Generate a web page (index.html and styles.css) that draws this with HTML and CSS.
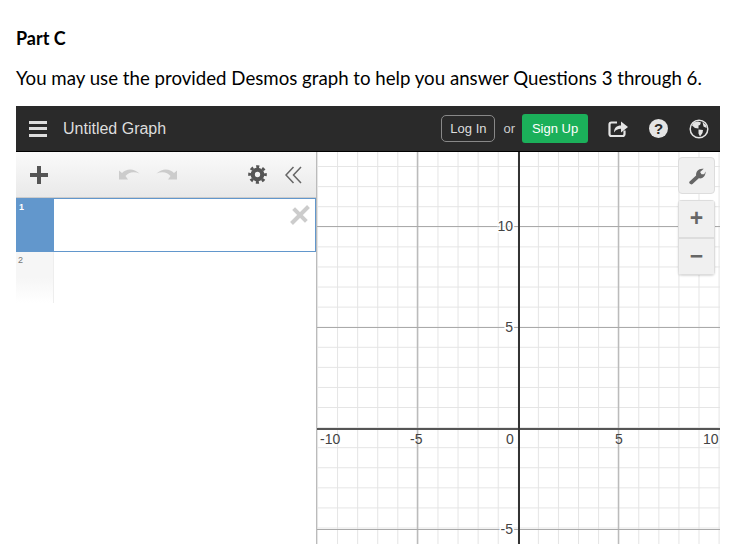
FILE: index.html
```html
<!DOCTYPE html>
<html lang="en">
<head>
    <meta charset="UTF-8">
    <title>Part C</title>
    <link rel="stylesheet" href="styles.css">
</head>
<body>
    <h4 class="part-title">Part C</h4>
    <p class="intro">You may use the provided Desmos graph to help you answer Questions 3 through 6.</p>

    <div class="calc">
        <div class="topbar">
            <div class="hamburger"><span></span><span></span><span></span></div>
            <div class="graph-title">Untitled Graph</div>
            <div class="account">
                <button class="login">Log In</button>
                <span class="or">or</span>
                <button class="signup">Sign Up</button>
            </div>
            <div class="top-icons">
                <svg class="top-icon" viewBox="0 0 20 20">
                    <path d="M9 3.500H3.500Q1.500 3.500 1.500 5.500V15Q1.500 17 3.500 17H14.500Q16.500 17 16.500 15V11.500" fill="none" stroke="#e4e4e4" stroke-width="2.200"/>
                    <path d="M6 13.500C6 9 8.500 6.500 13 6.500V2.500L20 8L13 13.500V9.800C10 9.800 7.500 11 6 13.500Z" fill="#e4e4e4"/>
                </svg>
                <div class="help-icon">?</div>
                <svg class="top-icon" viewBox="0 0 20 20">
                    <circle cx="10" cy="10" r="8.800" fill="none" stroke="#e4e4e4" stroke-width="1.500"/>
                    <path d="M4.500 3.500L9 2.500L12 3.500L11 6L9.500 6.500L9.500 9.500L6 9L3 6.500ZM9.500 10.500L14 11L13.500 14L11 17.500L9.500 14.500ZM13.500 3L17.500 6.500L17.500 9L14.500 7.500Z" fill="#e4e4e4"/>
                </svg>
            </div>
        </div>

        <div class="workspace">
            <div class="sidebar">
                <div class="toolbar">
                    <div class="plus-icon"></div>
                    <div class="history">
                        <svg class="history-icon" viewBox="0 0 21 12"><path d="M0 2.500L3 5C7 1 14 -0.500 20.500 5.500C15 3 9.500 4 6.500 8L9 11.500H0Z" fill="#ccc"/></svg>
                        <svg class="history-icon flip" viewBox="0 0 21 12"><path d="M0 2.500L3 5C7 1 14 -0.500 20.500 5.500C15 3 9.500 4 6.500 8L9 11.500H0Z" fill="#ccc"/></svg>
                    </div>
                    <svg class="gear" viewBox="0 0 20 20">
                        <circle cx="10" cy="10" r="5" fill="none" stroke="#555" stroke-width="4.400"/>
                        <circle cx="10" cy="10" r="8.300" fill="none" stroke="#555" stroke-width="3" stroke-dasharray="3.260 3.260" stroke-dashoffset="1.630"/>
                    </svg>
                    <svg class="collapse" viewBox="0 0 17 18">
                        <path d="M8.500 1L1 9L8.500 17M16 1L8.500 9L16 17" fill="none" stroke="#666" stroke-width="1.500"/>
                    </svg>
                </div>
                <div class="expr active">
                    <div class="expr-tab">1</div>
                    <div class="expr-close"></div>
                </div>
                <div class="expr empty">
                    <div class="expr-tab">2</div>
                </div>
            </div>

            <div class="graph">
                <svg class="paper" width="403" height="392" viewBox="317 152 403 392">
                    <defs>
                        <pattern id="minor" x="317" y="146" width="20.080" height="20.080" patternUnits="userSpaceOnUse">
                            <path d="M0.500 0V20.080M0 0.500H20.080" fill="none" stroke="#e4e4e4" stroke-width="1"/>
                        </pattern>
                    </defs>
                    <rect x="317" y="152" width="403" height="392" fill="url(#minor)"/>
                    <path d="M417.500 152V544M618.500 152V544" stroke="#bbb" stroke-width="1.500"/>
                    <path d="M317 226.500H720M317 327.500H720M317 529.500H720" stroke="#aaa" stroke-width="1"/>
                    <path d="M317 429H720" stroke="#555" stroke-width="2"/>
                    <path d="M519 152V544" stroke="#333" stroke-width="2"/>
                    <g class="tick-labels">
                        <text x="513" y="231" class="halo" text-anchor="end">10</text>
                        <text x="513" y="231" text-anchor="end">10</text>
                        <text x="513" y="332" class="halo" text-anchor="end">5</text>
                        <text x="513" y="332" text-anchor="end">5</text>
                        <text x="513" y="534" class="halo" text-anchor="end">-5</text>
                        <text x="513" y="534" text-anchor="end">-5</text>
                        <text x="320" y="444">-10</text>
                        <text x="410" y="444">-5</text>
                        <text x="506" y="444">0</text>
                        <text x="615" y="444">5</text>
                        <text x="703" y="444">10</text>
                    </g>
                </svg>
                <div class="graph-btns">
                    <button class="graph-btn wrench">
                        <svg viewBox="0 0 20 20" width="18" height="18"><path d="M1.500 16.500L9 9.500C8.500 5 12 1 17.500 2L13.500 5.500L15 8L18 8L19.500 5C19.800 10 16 13.500 12 12.500L5 19C3.500 20 0.500 18.500 1.500 16.500Z" fill="#666"/></svg>
                    </button>
                    <div class="zoom-group">
                        <button class="graph-btn zoom-btn">+</button>
                        <button class="graph-btn zoom-btn">−</button>
                    </div>
                </div>
            </div>
        </div>
    </div>
</body>
</html>
```

FILE: styles.css
```css
html, body {
    height: 100%;
}
body {
    margin: 0;
    padding: 28px 19px 0 16px;
    box-sizing: border-box;
    overflow: hidden;
    background: #fff;
    color: #000;
    font-family: "Lato", sans-serif;
}
.part-title {
    margin: 0 0 17px 0;
    font-size: 18px;
    line-height: 20px;
    font-weight: 700;
}
.intro {
    margin: 0 0 15px 0;
    font-size: 18.67px;
    line-height: 26px;
    white-space: nowrap;
}
.calc {
    font-family: "Liberation Sans", Arial, sans-serif;
}
.topbar {
    display: flex;
    align-items: center;
    height: 45px;
    background: #2a2a2a;
    border-bottom: 1px solid #000;
    color: #eee;
}
.hamburger {
    display: flex;
    flex-direction: column;
    gap: 3.5px;
    width: 18px;
    margin-left: 13px;
}
.hamburger span {
    display: block;
    height: 3px;
    background: #ddd;
}
.graph-title {
    margin-left: 16px;
    font-size: 16px;
    color: #ddd;
    flex: 1;
}
.account {
    display: flex;
    align-items: center;
}
.login {
    width: 54px;
    height: 27px;
    padding: 0;
    border: 1px solid #888;
    border-radius: 5px;
    background: transparent;
    color: #ddd;
    font: 13px "Liberation Sans", Arial, sans-serif;
}
.or {
    margin: 0 7px 0 8px;
    font-size: 13px;
    color: #ccc;
}
.signup {
    width: 66px;
    height: 29px;
    padding: 0;
    border: none;
    border-radius: 3px;
    background: #1bb05a;
    color: #fff;
    font: 13px "Liberation Sans", Arial, sans-serif;
}
.top-icons {
    display: flex;
    align-items: center;
    gap: 21px;
    margin-left: 20px;
    margin-right: 11px;
}
.top-icon {
    width: 20px;
    height: 20px;
}
.help-icon {
    width: 19px;
    height: 19px;
    border-radius: 50%;
    background: #e4e4e4;
    color: #2a2a2a;
    font-size: 15px;
    font-weight: 700;
    line-height: 19px;
    text-align: center;
}
.workspace {
    display: flex;
    height: 393px;
}
.sidebar {
    width: 300px;
    border-right: 1px solid #bbb;
    background: #fff;
}
.toolbar {
    display: flex;
    align-items: center;
    height: 45px;
    border-bottom: 1px solid #ccc;
    background: linear-gradient(#fafafa, #e9e9e9);
}
.plus-icon {
    width: 18px;
    height: 18px;
    margin-left: 14px;
    background: linear-gradient(#555, #555) center / 18px 4px no-repeat, linear-gradient(#555, #555) center / 4px 18px no-repeat;
}
.history {
    display: flex;
    gap: 16px;
    margin-left: 71px;
    margin-bottom: 2px;
}
.history-icon {
    width: 21px;
    height: 12px;
}
.flip {
    transform: scaleX(-1);
}
.gear {
    width: 19px;
    height: 19px;
    margin-left: 71px;
}
.collapse {
    width: 17px;
    height: 18px;
    margin-left: 18px;
}
.expr {
    display: flex;
    position: relative;
    box-sizing: border-box;
    height: 54px;
}
.expr-tab {
    width: 38px;
    padding: 3px 0 0 2px;
    box-sizing: border-box;
    font-size: 9px;
}
.active {
    border: 1px solid #6297cc;
    background: #fff;
}
.active .expr-tab {
    width: 37px;
    background: #6297cc;
    color: #fff;
    font-weight: 700;
}
.expr-close {
    position: absolute;
    top: 7px;
    right: 6px;
    width: 18px;
    height: 18px;
    background: linear-gradient(#ccc, #ccc) center / 24px 4px no-repeat;
    transform: rotate(45deg);
}
.expr-close::after {
    content: "";
    position: absolute;
    left: 7px;
    top: -3px;
    width: 4px;
    height: 24px;
    background: #ccc;
}
.empty .expr-tab {
    color: #777;
    height: 51px;
    border-right: 1px solid #eee;
    background: linear-gradient(#f6f6f6 50%, #fff);
}
.graph {
    position: relative;
    flex: 1;
    overflow: hidden;
}
.paper {
    display: block;
}
.tick-labels text {
    font-size: 14px;
    fill: #444;
}
.tick-labels .halo {
    fill: #fff;
    stroke: #fff;
    stroke-width: 3px;
}
.graph-btns {
    position: absolute;
    top: 5px;
    right: 5px;
    display: flex;
    flex-direction: column;
    gap: 6px;
}
.graph-btn {
    display: flex;
    align-items: center;
    justify-content: center;
    width: 37px;
    padding: 0;
    border: 1px solid #ddd;
    background: #f0f0f0;
    color: #666;
    font: bold 23px "Liberation Sans", Arial, sans-serif;
}
.wrench {
    height: 37px;
    border-radius: 4px;
}
.zoom-group {
    display: flex;
    flex-direction: column;
    border-radius: 4px;
    overflow: hidden;
    box-shadow: 0 1px 2px rgba(0, 0, 0, 0.15);
}
.zoom-btn {
    height: 37.5px;
}
```
